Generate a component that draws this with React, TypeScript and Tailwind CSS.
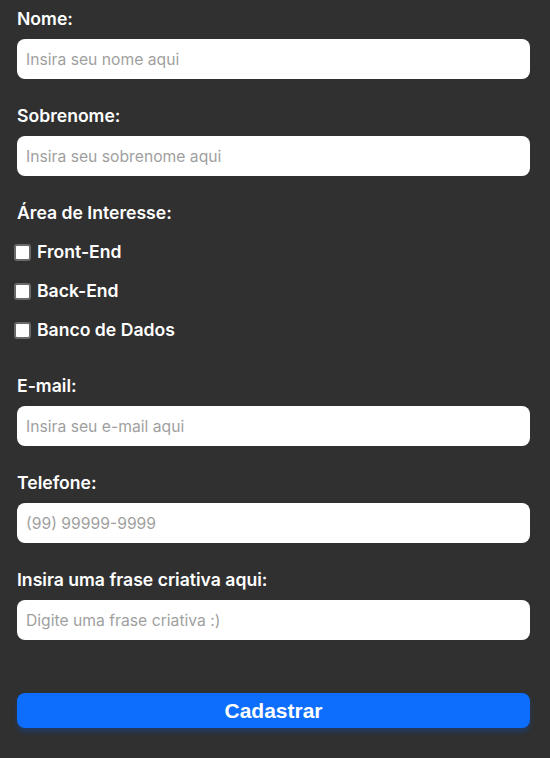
import { useState } from 'react';

const Field = ({ label, placeholder, type = 'text' }: { label: string; placeholder: string; type?: string }) => (
  <div className="mb-[26px] flex flex-col">
    <label className="mb-[9px] text-[17.6px] leading-[22px] font-semibold text-white">{label}</label>
    <input
      type={type}
      placeholder={placeholder}
      className="h-10 w-full rounded-lg bg-white px-[9px] text-[15.7px] text-gray-900 placeholder:text-[#9f9f9f] outline-none"
    />
  </div>
);

const interesses = ['Front-End', 'Back-End', 'Banco de Dados'];

export default function App() {
  const [checked, setChecked] = useState<string[]>([]);

  const toggle = (item: string) =>
    setChecked((prev) => (prev.includes(item) ? prev.filter((i) => i !== item) : [...prev, item]));

  return (
    <div className="min-h-screen bg-[#303030] pl-[17px] pr-[20px] pt-[8px] pb-8 font-['Inter',sans-serif]">
      <form className="flex flex-col" onSubmit={(e) => e.preventDefault()}>
        <Field label="Nome:" placeholder="Insira seu nome aqui" />
        <Field label="Sobrenome:" placeholder="Insira seu sobrenome aqui" />

        {/* Área de interesse */}
        <div className="flex flex-col">
          <span className="mb-[17px] text-[17.6px] leading-[22px] font-semibold text-white">Área de Interesse:</span>
          <div className="flex flex-col gap-[17px]">
            {interesses.map((item) => (
              <label key={item} className="-ml-[3px] flex h-[22px] items-center gap-[6px] text-[17.6px] font-semibold text-white">
                <input
                  type="checkbox"
                  checked={checked.includes(item)}
                  onChange={() => toggle(item)}
                  className="m-0 h-[17px] w-[17px] shrink-0 appearance-none rounded-[3px] border-2 border-[#6a6a6a] bg-white checked:border-[#0d6efd] checked:bg-[#0d6efd]"
                />
                {item}
              </label>
            ))}
          </div>
        </div>

        <div className="mt-[34px]">
          <Field label="E-mail:" placeholder="Insira seu e-mail aqui" type="email" />
          <Field label="Telefone:" placeholder="(99) 99999-9999" type="tel" />
          <Field label="Insira uma frase criativa aqui:" placeholder="Digite uma frase criativa :)" />
        </div>

        <button
          type="submit"
          className="mt-[27px] h-[35px] w-full rounded-lg bg-[#0d6efd] font-['Liberation_Sans',Arial,sans-serif] text-[21px] font-bold text-white shadow-[0_4px_5px_rgba(20,70,150,0.5)]"
        >
          Cadastrar
        </button>
      </form>
    </div>
  );
}
